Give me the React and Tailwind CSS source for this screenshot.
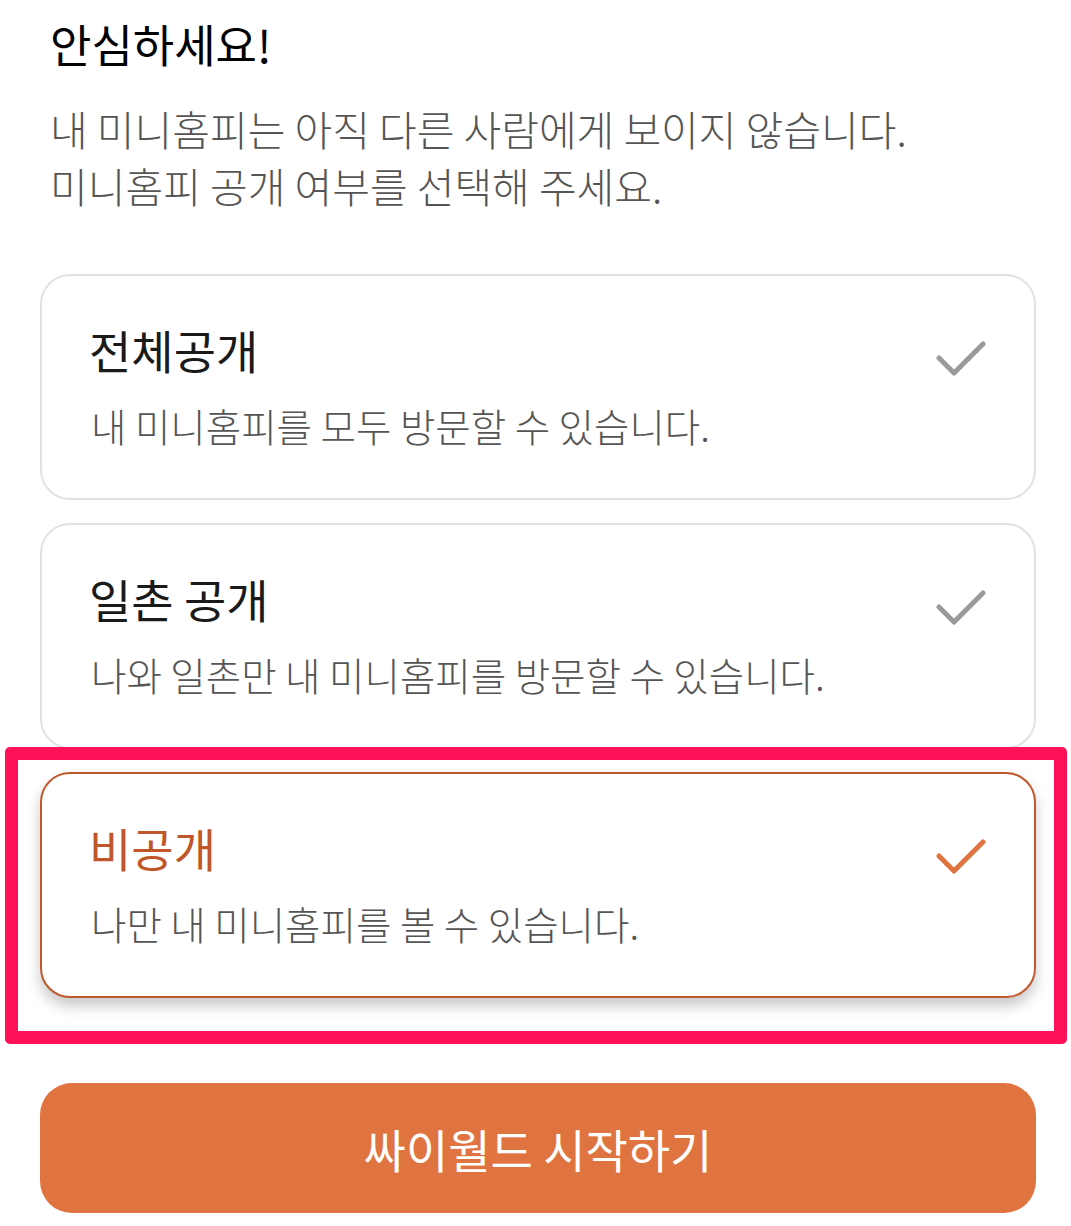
const options = [
  { title: '전체공개', desc: '내 미니홈피를 모두 방문할 수 있습니다.', selected: false },
  { title: '일촌 공개', desc: '나와 일촌만 내 미니홈피를 방문할 수 있습니다.', selected: false },
  { title: '비공개', desc: '나만 내 미니홈피를 볼 수 있습니다.', selected: true },
];

const Check = ({ color }) => (
  <svg width="52" height="40" viewBox="0 0 52 40" fill="none" className="shrink-0">
    <polyline
      points="3,18 18,33 47,4"
      stroke={color}
      strokeWidth="5"
      strokeLinecap="round"
      strokeLinejoin="round"
    />
  </svg>
);

const OptionCard = ({ title, desc, selected }) => (
  <div
    className={
      selected
        ? 'h-[226px] rounded-[30px] border-2 border-[#c05a2c] bg-white shadow-[0_8px_14px_rgba(0,0,0,0.22)] flex items-start justify-between pl-[47px] pr-[46px] pt-[42px]'
        : 'h-[226px] rounded-[30px] border-2 border-[#e2e2e2] bg-white flex items-start justify-between pl-[47px] pr-[46px] pt-[42px]'
    }
  >
    <div className="flex flex-col">
      <div
        className={
          selected
            ? 'text-[46px] leading-[62px] font-normal text-[#c0562a]'
            : 'text-[46px] leading-[62px] font-normal text-[#1a1a1a]'
        }
      >
        {title}
      </div>
      <div className="mt-[20px] pl-[2px] text-[38.5px] leading-[50px] font-light text-[#555555]">{desc}</div>
    </div>
    <div className="pt-[22px]">
      <Check color={selected ? '#e07440' : '#9a9a9a'} />
    </div>
  </div>
);

export default function App() {
  return (
    <div
      className="w-[1071px] h-[1226px] bg-white overflow-hidden pl-[40px] pr-[35px]"
      style={{ fontFamily: '"Noto Sans CJK KR", "Noto Sans", sans-serif' }}
    >
      <h1 className="pl-[10px] pt-[12px] text-[45px] leading-[64px] font-normal text-black">안심하세요!</h1>
      <p className="pl-[10px] mt-[24px] text-[41px] leading-[57px] font-light text-[#555555]">
        내 미니홈피는 아직 다른 사람에게 보이지 않습니다.
        <br />
        미니홈피 공개 여부를 선택해 주세요.
      </p>

      <div className="mt-[60px] flex flex-col gap-[23px]">
        {options.map((o) =>
          o.selected ? (
            <div key={o.title} className="relative">
              <OptionCard {...o} />
              <div className="absolute -left-[35px] -right-[31px] -top-[25px] -bottom-[46px] border-[13px] border-[#ff1158] rounded-[5px] pointer-events-none" />
            </div>
          ) : (
            <OptionCard key={o.title} {...o} />
          )
        )}
      </div>

      <button className="mt-[85px] w-full h-[130px] rounded-[32px] bg-[#e07440] text-white text-[46px] font-normal flex items-center justify-center">
        싸이월드 시작하기
      </button>
    </div>
  );
}
